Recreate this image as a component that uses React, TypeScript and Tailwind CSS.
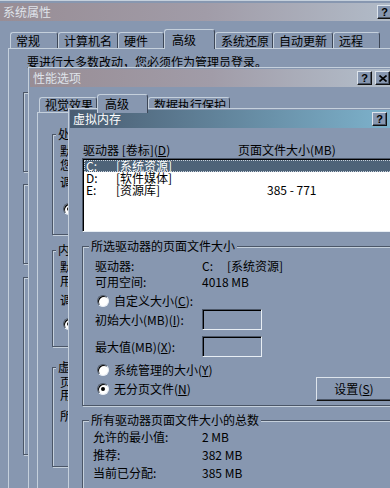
import React from "react";

function TitleBtn({ kind }: { kind: "help" | "close" }) {
  return (
    <div className="w-[15px] h-[14px] shrink-0 bg-[#8797b0] border border-[#dde4ec] border-r-[#111] border-b-[#111] shadow-[inset_-1px_-1px_0_#4b5667] flex items-center justify-center">
      {kind === "help" ? (
        <span className="text-[11px] leading-none font-bold text-black font-['Liberation_Sans',sans-serif]">?</span>
      ) : (
        <svg width="8" height="7" viewBox="0 0 8 7">
          <path d="M0.5 0.5 L7.5 6.5 M7.5 0.5 L0.5 6.5" stroke="#000" strokeWidth="1.6" />
        </svg>
      )}
    </div>
  );
}

function TitleBar({ title, active = false }: { title: string; active?: boolean }) {
  return (
    <div
      className={`h-[18px] shrink-0 flex items-center pl-[3px] pr-[2px] ${
        active
          ? "bg-linear-to-r from-[#4a5d72] to-[#80b7d1] text-white"
          : "bg-linear-to-r from-[#988d95] via-[#a19ca8] to-[#b3bfcc] text-[#dfe3ea]"
      }`}
    >
      <span className="whitespace-nowrap">{title}</span>
      <div className="ml-auto flex gap-[3px]">
        <TitleBtn kind="help" />
        <TitleBtn kind="close" />
      </div>
    </div>
  );
}

function Tab({ label, w, h, sel = false }: { label: string; w: string; h: string; sel?: boolean }) {
  return (
    <div
      className={`${w} ${h} ${
        sel ? "-mb-px relative z-10 bg-[#8797b0] pl-[7px]" : "pl-[5px]"
      } shrink-0 flex items-center border-l border-t border-r border-l-[#c5d0dc] border-t-[#c5d0dc] border-r-[#3d4757] rounded-t-[3px] whitespace-nowrap`}
    >
      {label}
    </div>
  );
}

function Group({
  label,
  lx,
  cls,
  children,
}: {
  label?: string;
  lx?: string;
  cls: string;
  children?: React.ReactNode;
}) {
  return (
    <div className={`relative shrink-0 border border-[#4b5667] shadow-[inset_1px_1px_0_#c5d0dc,1px_1px_0_#c5d0dc] ${cls}`}>
      {label && (
        <span className={`absolute -top-[8px] ${lx} px-[2px] bg-[#8797b0] whitespace-nowrap`}>{label}</span>
      )}
      {children}
    </div>
  );
}

function Radio({ on = false }: { on?: boolean }) {
  return (
    <span className="w-[12px] h-[12px] shrink-0 rounded-full bg-white border border-[#4b5667] border-b-[#e8eef4] border-r-[#e8eef4] shadow-[inset_1px_1px_0_#000] flex items-center justify-center">
      {on && <span className="w-[4px] h-[4px] rounded-full bg-black" />}
    </span>
  );
}

const sunken =
  "border border-[#4b5667] border-b-[#e8eef4] border-r-[#e8eef4] shadow-[inset_1px_1px_0_#000]";

// only the first glyph of these lines peeks out from under 虚拟内存
function Peek({ text, cls }: { text: string; cls: string }) {
  return <div className={`w-[9px] overflow-hidden whitespace-nowrap ${cls}`}>{text}</div>;
}

function DriveRow({ d, label, size, sel = false }: { d: string; label: string; size?: string; sel?: boolean }) {
  return (
    <div
      className={`h-[12px] flex items-center pl-[2px] leading-[12px] whitespace-nowrap ${
        sel ? "bg-[#4e6378] text-white outline-1 outline-dotted outline-[#c8d2dc] -outline-offset-1" : ""
      }`}
    >
      <span className="w-[30px] shrink-0">{d}</span>
      <span className="w-[151px] shrink-0">{label}</span>
      <span>{size}</span>
    </div>
  );
}

export default function App() {
  return (
    <div className="relative w-[390px] h-[488px] overflow-hidden bg-[#8797b0] text-black text-[12px] leading-[14px] font-['Noto_Sans_CJK_SC','Noto_Sans',sans-serif]">
      {/* 系统属性 */}
      <div className="absolute -left-[2px] top-0 w-[415px] h-[500px] bg-[#8797b0] border-l border-t border-[#c5d0dc] px-[1px] pt-[2px] flex flex-col">
        <TitleBar title="系统属性" />
        <div className="mt-[8px] ml-[10px] h-[19px] flex items-end">
          <Tab label="常规" w="w-[48px]" h="h-[16px]" />
          <Tab label="计算机名" w="w-[60px]" h="h-[16px]" />
          <Tab label="硬件" w="w-[46px]" h="h-[16px]" />
          <Tab label="高级" w="w-[51px]" h="h-[20px]" sel />
          <Tab label="系统还原" w="w-[58px]" h="h-[16px]" />
          <Tab label="自动更新" w="w-[60px]" h="h-[16px]" />
          <Tab label="远程" w="w-[47px]" h="h-[16px]" />
        </div>
        <div className="ml-[8px] flex-1 border-l border-t border-[#c5d0dc] pl-[14px] pt-[6px] flex flex-col">
          <div className="ml-[4px] h-[14px] whitespace-nowrap">要进行大多数改动，您必须作为管理员登录。</div>
          <Group cls="mt-[23px] h-[80px] w-[370px]" />
          <Group cls="mt-[12px] h-[80px] w-[370px]" />
          <Group cls="mt-[13px] h-[178px] w-[370px]" />
        </div>
      </div>

      {/* 性能选项 */}
      <div className="absolute left-[28px] top-[67px] w-[365px] h-[430px] bg-[#8797b0] border-l border-t border-[#c5d0dc] p-[1px] flex flex-col">
        <TitleBar title="性能选项" />
        <div className="mt-[7px] ml-[9px] h-[18px] flex items-end">
          <Tab label="视觉效果" w="w-[58px]" h="h-[15px]" />
          <Tab label="高级" w="w-[51px]" h="h-[19px]" sel />
          <Tab label="数据执行保护" w="w-[82px]" h="h-[15px]" />
        </div>
        <div className="ml-[7px] flex-1 border-l border-t border-[#c5d0dc] pl-[14px] pt-[21px] flex flex-col">
          <Group label="处" lx="left-[3px]" cls="h-[101px] w-[330px] pl-[7px] pt-[9px]">
            <Peek text="默认" cls="h-[14px]" />
            <Peek text="您的" cls="h-[14px]" />
            <Peek text="调整" cls="mt-[3px] h-[14px]" />
            <div className="mt-[13px] h-[14px] flex items-center pl-[3px]">
              <Radio on />
            </div>
          </Group>
          <Group label="内" lx="left-[3px]" cls="mt-[15px] h-[97px] w-[330px] pl-[7px] pt-[9px]">
            <Peek text="默认" cls="h-[14px]" />
            <Peek text="用程" cls="h-[14px]" />
            <Peek text="调整" cls="mt-[5px] h-[14px]" />
            <div className="mt-[10px] h-[14px] flex items-center pl-[3px]">
              <Radio on />
            </div>
          </Group>
          <Group label="虚" lx="left-[3px]" cls="mt-[20px] h-[100px] w-[330px] pl-[7px] pt-[7px]">
            <Peek text="页面" cls="h-[13px]" />
            <Peek text="用" cls="h-[14px]" />
            <Peek text="所有" cls="mt-[7px] h-[14px]" />
          </Group>
        </div>
      </div>

      {/* 虚拟内存 */}
      <div className="absolute left-[68px] top-[108px] w-[340px] h-[390px] bg-[#8797b0] border-l border-t border-[#c5d0dc] p-[1px] flex flex-col">
        <TitleBar title="虚拟内存" active />
        <div className="pl-[12px] flex flex-col">
          <div className="mt-[15px] h-[13px] flex items-center pl-[1px] whitespace-nowrap">
            <span className="w-[155px] shrink-0">
              驱动器 [卷标](<u>D</u>)
            </span>
            <span>页面文件大小(MB)</span>
          </div>

          <div className={`mt-[2px] h-[74px] w-[312px] shrink-0 bg-white p-[1px] ${sunken}`}>
            <DriveRow d="C:" label="[系统资源]" sel />
            <DriveRow d="D:" label="[软件媒体]" />
            <DriveRow d="E:" label="[资源库]" size="385 - 771" />
          </div>

          <Group label="所选驱动器的页面文件大小" lx="left-[6px]" cls="mt-[14px] h-[160px] w-[312px] pt-[12px] pl-[12px]">
            <div className="h-[14px] flex items-center whitespace-nowrap">
              <span className="w-[107px] shrink-0">驱动器:</span>
              <span className="w-[25px] shrink-0">C:</span>
              <span>[系统资源]</span>
            </div>
            <div className="mt-[2px] h-[14px] flex items-center whitespace-nowrap">
              <span className="w-[107px] shrink-0">可用空间:</span>
              <span>4018 MB</span>
            </div>
            <div className="mt-[5px] h-[14px] flex items-center whitespace-nowrap">
              <span className="ml-[2px]">
                <Radio />
              </span>
              <span className="ml-[5px]">
                自定义大小(<u>C</u>):
              </span>
            </div>
            <div className="mt-[1px] h-[21px] flex items-center whitespace-nowrap">
              <span className="w-[107px] shrink-0">
                初始大小(MB)(<u>I</u>):
              </span>
              <div className={`w-[60px] h-[21px] ${sunken}`} />
            </div>
            <div className="mt-[6px] h-[21px] flex items-center whitespace-nowrap">
              <span className="w-[107px] shrink-0">
                最大值(MB)(<u>X</u>):
              </span>
              <div className={`w-[60px] h-[21px] ${sunken}`} />
            </div>
            <div className="mt-[6px] h-[14px] flex items-center whitespace-nowrap">
              <span className="ml-[2px]">
                <Radio />
              </span>
              <span className="ml-[5px]">
                系统管理的大小(<u>Y</u>)
              </span>
            </div>
            <div className="h-[24px] flex items-center whitespace-nowrap">
              <div className="w-[221px] shrink-0 flex items-center">
                <span className="ml-[2px]">
                  <Radio on />
                </span>
                <span className="ml-[5px]">
                  无分页文件(<u>N</u>)
                </span>
              </div>
              <div className="w-[76px] h-[24px] shrink-0 border border-[#dde4ec] border-r-[#111] border-b-[#111] shadow-[inset_-1px_-1px_0_#4b5667] flex items-center justify-center">
                设置(<u>S</u>)
              </div>
            </div>
          </Group>

          <Group label="所有驱动器页面文件大小的总数" lx="left-[6px]" cls="mt-[14px] h-[90px] w-[312px] pt-[9px] pl-[10px] flex flex-col gap-[4px]">
            <div className="h-[14px] flex items-center whitespace-nowrap">
              <span className="w-[109px] shrink-0">允许的最小值:</span>
              <span>2 MB</span>
            </div>
            <div className="h-[14px] flex items-center whitespace-nowrap">
              <span className="w-[109px] shrink-0">推荐:</span>
              <span>382 MB</span>
            </div>
            <div className="h-[14px] flex items-center whitespace-nowrap">
              <span className="w-[109px] shrink-0">当前已分配:</span>
              <span>385 MB</span>
            </div>
          </Group>
        </div>
      </div>
    </div>
  );
}
